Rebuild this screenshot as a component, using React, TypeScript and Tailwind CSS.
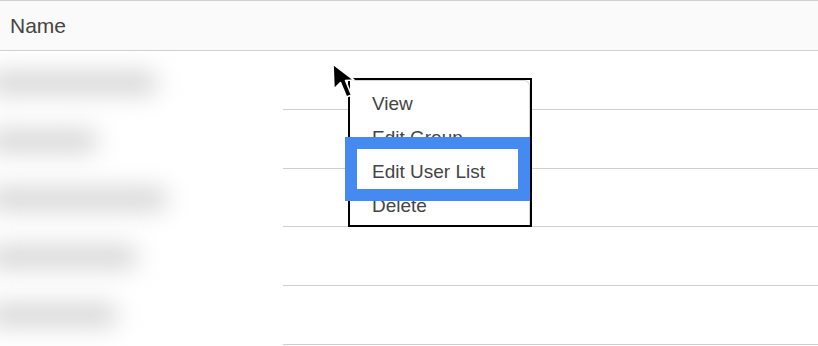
import React from "react";

const rows = [0, 1, 2, 3, 4];

const blobWidths = [170, 110, 180, 150, 130];

export default function App() {
  return (
    <div
      className="relative w-[818px] h-[346px] overflow-hidden bg-white text-[#444]"
      style={{ fontFamily: '"Liberation Sans", Arial, sans-serif' }}
    >
      {/* table */}
      <div className="border-t border-[#cfcfcf]">
        <div className="h-[50px] bg-[#fafafa] border-b border-[#cfcfcf] pl-[10px] text-[21px] leading-[50px]">
          Name
        </div>
        {rows.map((r) => (
          <div key={r} className="h-[58.75px] border-b border-[#cfcfcf]" />
        ))}
      </div>

      {/* redaction blur */}
      <div className="absolute left-0 top-[52px] w-[283px] h-[294px] bg-white overflow-hidden flex flex-col gap-[36px] pt-[20px]">
        {blobWidths.map((w, i) => (
          <div
            key={i}
            className="shrink-0 -ml-[12px] h-[22px] rounded-full bg-[#d3d3d3] blur-[12px]"
            style={{ width: w }}
          />
        ))}
      </div>

      {/* context menu in highlighted box */}
      <div className="absolute left-[348px] top-[78px] w-[184px] h-[149px] border-2 border-black bg-white">
        <div className="h-full w-[180px] bg-white border-r border-t border-[#d6d6d6] rounded-tr-[6px] pt-[6px] pl-[22px] text-[19px] leading-[34px]">
          <div>View</div>
          <div>Edit Group</div>
          <div>Edit User List</div>
          <div>Delete</div>
        </div>
      </div>

      {/* blue highlight annotation */}
      <div className="absolute left-[345px] top-[137px] w-[185px] h-[64px] border-[12px] border-[#448af0]" />

      {/* cursor */}
      <svg
        className="absolute left-[330px] top-[61px]"
        width="28"
        height="42"
        viewBox="0 0 28 42"
      >
        <path
          d="M3 3 L4 28 L10.5 21.5 L16.5 36 L21.5 34 L15.5 19.5 L24 19 Z"
          fill="#000"
          stroke="#fff"
          strokeWidth="1.6"
          strokeLinejoin="round"
        />
      </svg>
    </div>
  );
}
